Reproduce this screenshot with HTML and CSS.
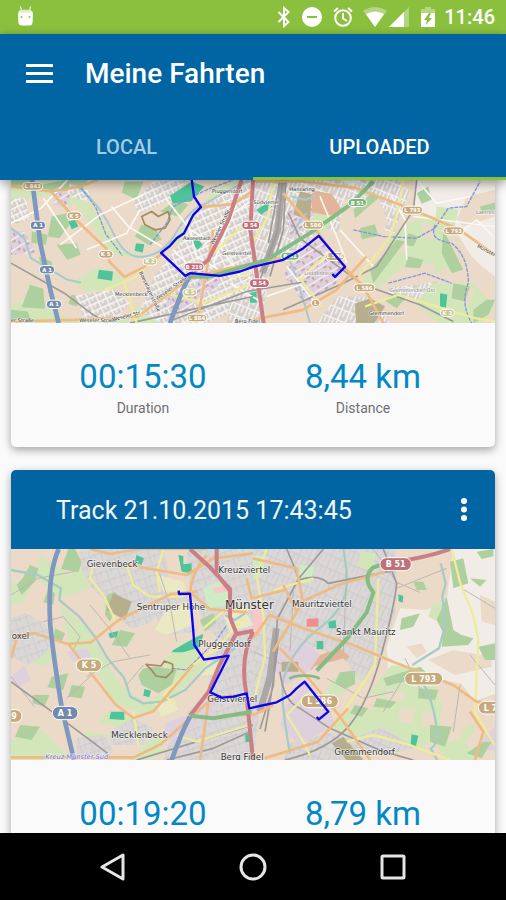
FILE: index.html
```html
<!DOCTYPE html>
<html lang="de">
<head>
<meta charset="utf-8">
<meta name="viewport" content="width=device-width, initial-scale=1">
<title>Meine Fahrten</title>
<link rel="stylesheet" href="styles.css">
</head>
<body>
<div class="status">
  <svg class="droid" viewBox="0 0 17 20" aria-hidden="true"><path class="w" d="M1 8q0-3 3-4h9q3 1 3 4l-.5 9q-.4 2.500-3 2.500h-8q-2.600 0-3-2.500z"/><path d="M4.500 4.500 3.500.5M12.500 4.500l1-4" class="line thin"/><path class="shade" d="M2 5q6-3 13 0l-1 1.500H3z"/><circle class="hole" cx="4.500" cy="11" r="1"/><circle class="hole" cx="12.500" cy="11" r="1"/></svg>
  <div class="status-icons">
    <svg class="bt" viewBox="0 0 14 22" aria-hidden="true"><path class="line" d="m1.500 6 10 10L7 20V2l4.500 4-10 10"/></svg>
    <svg class="dnd" viewBox="0 0 20 20" aria-hidden="true"><circle class="w" cx="10" cy="10" r="10"/><path d="M5 10h10" class="minus"/></svg>
    <svg class="alarm" viewBox="0 0 20 20" aria-hidden="true"><circle class="line" cx="10" cy="11" r="7.800"/><path class="line" d="M10 6v5.500l4 2.500M1 4.500 5 1M19 4.500 15 1"/></svg>
    <svg class="wifi" viewBox="0 0 24 20" aria-hidden="true"><path class="faint" d="M0 4q12-8 24 0L12 20z"/><path class="w" d="M3 7q9-5 18 0l-9 13z"/></svg>
    <svg class="cell" viewBox="0 0 20 20" aria-hidden="true"><path class="faint" d="M20 0v20H0z"/><path class="w" d="M15 5v15H0z"/></svg>
    <svg class="battery" viewBox="0 0 14 20" aria-hidden="true"><path class="faint" d="M4 0h6v2h4v4H0V2h4z"/><path class="w" d="M0 6h14v14H0z"/><path class="hole" d="m8 6-5 7h3l-1 5 6-7H8l2-5z"/></svg>
    <time>11:46</time>
  </div>
</div>
<header class="appbar">
  <div class="toolbar">
    <button class="icon-btn menu" aria-label="Menu"><svg viewBox="0 0 27 19"><path d="M0 1.500h27M0 9.500h27M0 17.500h27"/></svg></button>
    <h1>Meine Fahrten</h1>
  </div>
  <div class="tabs" role="tablist">
    <button role="tab" aria-selected="false">LOCAL</button>
    <button role="tab" aria-selected="true">UPLOADED</button>
  </div>
</header>
<main>
  <article class="card first">
    <svg class="map map-a" viewBox="33 30 1452 430" preserveAspectRatio="xMidYMid slice" role="img" aria-label="Route map">
      <defs>
        <pattern id="blocks" width="26" height="20" patternUnits="userSpaceOnUse" patternTransform="rotate(-24)"><rect class="u" width="26" height="20"/><path d="M0 2H26M5 0V20M17 2V12" class="street"/></pattern>
        <pattern id="blocks2" width="24" height="34" patternUnits="userSpaceOnUse" patternTransform="rotate(22)"><rect class="u" width="24" height="34"/><path d="M0 4H24M4 0V34M15 4V24" class="street"/></pattern>
        <pattern id="works" width="30" height="28" patternUnits="userSpaceOnUse" patternTransform="rotate(-32)"><rect class="i" width="30" height="28"/><path d="M7 5h11v6H7zM21 14h6v10h-6z" class="hall"/><path d="M0 1H30" class="street"/></pattern>
      </defs>
      <rect class="farm" x="33" y="30" width="1452" height="430"/>
      <path class="grass" d="M33 30h220l14 60-60 15-55-30-119 20zM270 100l95 140 90 20 70-60 80-85 35-60 120-35v45l-110 50-80 80-60 45-90 25-80-10-60-80-60-80zM300 290l70 30-10 35-105 10-35-30zM33 400l90-10 30 30 60 30 180-8-20 18H33zM410 410l70 15 40-10-10 45H390z"/>
      <path class="wood" d="M33 30l60 0 8 14-68 5zM100 50l100-20h65l-22 32-75 2zM33 90l45 10 5 40-30 20-20-5zM155 140l45-10 8 35-30 40-35-5zM95 185l48 10-5 30-44-6zM170 225l60-5 12 35-40 15zM115 260l40 15 5 30-32-8zM375 35l55 0-20 55-45-22zM425 165l45 15 15 30-40 15-40-25zM90 345l40 12 5 60-70-5zM215 375l30 5-15 30-25-8zM480 125l50-35 35 15-30 35zM33 420l50 5 12 35H33z"/>
      <path class="blocks" d="M33 90l45-8 10 70-55 5zM210 40l60 25-10 30-60-20zM400 95l60-60 100-5-45 60-100 40zM600 110l80-50 80-30v310l-80 95-60 25H480l-60-35 45-110 50-60 50-70zM225 378l120-20 45 40-40 50H255z"/>
      <path class="blocks2" d="M759 30h430l40 35-50 130-55-30-40 40-120-30-80 75-70 20-30 190H680l20-100 59-40zM1165 355l150-20 20 40-40 35-130-25zM1010 380l100 0 60 80H950zM1180 200l40 0-45 80-30-35z"/>
      <path class="works" d="M860 130l110-60 20 40-120 100zM900 250l65-45 70 90-30 50-90 60-65-90zM33 180l40 5 35 65-75 5zM165 50l45 25-10 40-40-10zM600 300l60 20-10 45-60-5zM510 380l80-35 20 35-60 50-60-20z"/>
      <path class="farm" d="M1030 90l105-10 30 80-70 80-80-50zM1080 185l100 10-10 80-80 0-40-45z"/>
      <path class="pale" d="M1245 30h240v300l-70-70-70-110-100-20zM1020 30h60l-20 20z"/>
      <path class="farm" d="M1370 150l30-70 85-20v80l-95 30zM1380 310l60-25 45 35v60l-75 25z"/>
      <path class="grass" d="M1170 200l100-65 60 35 40 110-60 30-90-30-90 80-45-30 70-60zM1300 340l120 0 65 70-40 50h-130l-70-60zM1310 110l65 10-15 70-55-15zM970 70l60 50-70 75-30-35z"/>
      <path class="farm" d="M1190 210l40 5-10 35-40-5zM1240 285l60-5 10 40-60 0zM1270 160l40 10-10 40-35-8zM1380 350l45 10-20 45-40-15z"/>
      <path class="wood" d="M1060 120l60-55 15 20-70 60zM1080 175l45-12 10 35-50 10zM1110 300l80-90 25 5-95 125zM1250 70l35-20 10 40-30 12zM1330 180l30 60 30 60-35 10-30-60zM1360 340l50 10-15 45-40-10zM1225 190l30 10-15 30-25-5zM1440 110l45-12v24l-40 10zM1420 420l40-30 25 0-20 45-45 25zM1225 260l45 10-10 25-45-3zM1150 390l35-20 30 15-25 30z"/>
      <path class="olive" d="M1065 402l45-17 45 25-32 50h-55zM900 65l35 8-5 80-50-20z"/>
      <path class="school" d="M690 290l60 0v30l-65 5z"/>
      <path class="brick" d="M935 62l60 10 35 55-45 10-50-10z"/>
      <path class="pitch" d="M510 78l65-43 38 15-40 45-55 5zM297 300l42 5-3 28-44-7zM205 155l20-5 10 20-20 8zM408 220l25 3-5 25-24-5zM1320 370l22 4-4 40-18-3zM573 215l20-10 15 20-15 15zM750 370l20-6v35l-20 0zM770 120l30-20 18 10-35 25z"/>
      <path class="water" d="M235 50q70 60 105 140t95 70q60-10 95-75 45-75 90-85 55-35 130-70M33 175l40 30 20 60 110 65 40 8M875 80l40 10 40-15M865 260q35 90 65 200M920 130l-45 60"/>
      <path class="stream" d="M450 225l50-65 20-50 100-50 80-30M242 52l45 60 30 80 50 65M1060 180l90 20 100 5 55-30 40-60 55-5 40-75M1305 165q-10 30 5 40t45 15q50 40 50 120-25 60 10 120M1165 340l110-30 80 30"/>
      <path class="road minor" d="M33 160l90-45 80-85M180 225l120-90 130-60M260 240l120-50 40-70M335 110l50 60 100 60M130 85l60 90 40 60M500 90l70 90 90 50 60 90M560 150l30 110 100 60M610 230l100-120M640 280l60-150 59-40M520 240l60 60M960 80l50 120 30 80M1175 80l40 70 5 120M1020 180l100 110M1240 140l245 30M1390 180l40-30 50 50M1250 30l60 70 100-20M890 330l100-75M860 290l90 115M800 380l100-35M690 340l100 60"/>
      <path class="yard" d="M848 30l-15 150-45 130"/>
      <path class="rail" d="M33 280l160 90 80 60 50 30M520 450l220-85 180-30M390 460l180-40 190-40M848 30l-15 150-60 170M858 30l-8 150-40 140M840 30l-35 190M865 130l35 75 80 60 110 80 170 60 100 50M850 420l180-80 100-50 110-170 10-90"/>
      <path class="road tertiary" d="M470 260l-60 60-95 40M540 350l40-40 70-70 110-100M500 370l110 30 149-60M820 30l-15 110-45 75M1210 30q-20 130-45 180l-90 110M900 330l100-95M895 320l70 90M1095 410l100-35 100 30 130 40 60 10M370 330l40 130"/>
      <path class="road second" d="M33 50l120 15 90-15 50-20M153 65l80 90 85 80 10 40 45 46 60-30 60-45M33 455l190-5 190-10 150-110 100-30 180-35M603 112l100-10 56-40M850 70q30 40 90 100l90 120 60 60 60 110M640 180q-20 130-50 280M759 35l150 0 160 20 170 65 140 60 105 75M759 450l150-30 100-60 90-100"/>
      <path class="road primary" d="M725 30l-40 120-60 120-60 50M759 30l-8 150 40 280"/>
      <path class="road green" d="M1120 35l-70 70-120 85-130 80-170 50h-70"/>
      <path class="road motor" d="M96 30l25 190 30 140 25 100M568 318q-25 50-58 142"/>
      <path class="bound" d="M425 140l30-15 20 15 30-15 5 25-15 25-30 5-30-15z"/>
      <g class="label s">
        <text x="636" y="70">Pluggendorf</text><text x="549" y="212">Aaseestadt</text><text x="667" y="255">Geistviertel</text><text x="345" y="380">Mecklenbeck</text><text x="760" y="102">Südviertel</text><text class="dim" x="913" y="317">Loddenheide</text><text class="dim" x="1170" y="368">Gremmendorf-Ost</text><text x="1107" y="436">Gremmendorf</text><text class="dim" x="1428" y="132">Laerfeld</text><text x="705" y="459">Berg Fidel</text><text x="33" y="458">er Straße</text><text x="238" y="456">Weseler Straße</text><text x="338" y="454" transform="rotate(-14 338 454)">Weseler Str.</text><text x="472" y="392" transform="rotate(-36 472 392)">Weseler Straße</text><text x="417" y="307" transform="rotate(65 417 307)">Boeselagerstraße</text><text x="640" y="225" transform="rotate(-64 640 225)">Weseler Straße</text><text x="1430" y="232" transform="rotate(28 1430 232)">Münster</text><text x="868" y="64">Hansaring</text>
      </g>
      <g class="shield tan"><rect x="68" y="38" width="60" height="23" rx="11"/><text x="98" y="56">L 843</text><rect x="201" y="126" width="43" height="23" rx="11"/><text x="222" y="144">K 5</text><rect x="296" y="242" width="43" height="23" rx="11"/><text x="317" y="260">K 5</text><rect x="562" y="433" width="58" height="23" rx="11"/><text x="591" y="451">L 884</text><rect x="908" y="154" width="62" height="24" rx="12"/><text x="939" y="173">L 586</text><rect x="977" y="248" width="56" height="24" rx="12"/><text x="1005" y="266">L 586</text><rect x="1061" y="342" width="64" height="24" rx="12"/><text x="1093" y="361">L 586</text><rect x="1206" y="109" width="62" height="24" rx="12"/><text x="1237" y="128">L 793</text><rect x="1330" y="171" width="62" height="24" rx="12"/><text x="1361" y="190">L 793</text><rect x="934" y="389" width="26" height="22" rx="11"/><text x="947" y="407">L</text></g>
      <g class="shield soft"><rect x="429" y="264" width="42" height="22" rx="11"/><text x="450" y="281">K 2</text><rect x="548" y="357" width="42" height="22" rx="11"/><text x="569" y="374">K 5</text><rect x="1321" y="418" width="42" height="22" rx="11"/><text x="1342" y="435">K 3</text></g>
      <g class="shield blue"><rect x="91" y="154" width="46" height="25" rx="12"/><text x="114" y="173">A 1</text><rect x="118" y="287" width="46" height="25" rx="12"/><text x="141" y="306">A 1</text><rect x="139" y="391" width="46" height="25" rx="12"/><text x="162" y="410">A 1</text></g>
      <g class="shield red"><rect x="552" y="279" width="60" height="24" rx="12"/><text x="582" y="298">B 219</text><rect x="725" y="154" width="54" height="25" rx="12"/><text x="752" y="173">B 54</text><rect x="748" y="327" width="60" height="26" rx="13"/><text x="778" y="347">B 54</text></g>
      <g class="shield bgreen"><rect x="1044" y="86" width="56" height="24" rx="12"/><text x="1072" y="105">B 51</text><rect x="842" y="247" width="56" height="24" rx="12"/><text x="870" y="266">B 51</text></g>
      <path class="route" d="M574 20l8 60 21 32-23 23-28 55-22 15-20 23-27 21 73 69 14-8 90 8 60-13 39-14 91-21 60-35 46-37 79 93-30 30-8-8"/>
    </svg>
    <div class="stats">
      <p><strong>00:15:30</strong><span>Duration</span></p>
      <p><strong>8,44 km</strong><span>Distance</span></p>
    </div>
  </article>
  <article class="card">
    <header class="card-head">
      <h2>Track 21.10.2015 17:43:45</h2>
      <button class="icon-btn more" aria-label="More options"><svg viewBox="0 0 6 23"><circle cx="3" cy="3" r="3"/><circle cx="3" cy="11.500" r="3"/><circle cx="3" cy="20" r="3"/></svg></button>
    </header>
    <svg class="map map-b" viewBox="33 12 1452 633" preserveAspectRatio="xMidYMid slice" role="img" aria-label="Route map">
      <defs>
        <pattern id="town" width="34" height="28" patternUnits="userSpaceOnUse" patternTransform="rotate(-18)"><rect class="u2" width="34" height="28"/><path d="M0 5H34M8 5V28M22 0V16" class="lane"/></pattern>
        <pattern id="town2" width="30" height="38" patternUnits="userSpaceOnUse" patternTransform="rotate(24)"><rect class="u2" width="30" height="38"/><path d="M0 5H30M8 5V26M22 0V38" class="lane"/></pattern>
      </defs>
      <rect class="farm" x="33" y="12" width="1452" height="633"/>
      <path class="grass" d="M120 30l90 60 40-20 20 60-90 30-70-60zM180 180l80 70 50 80 50 90 70 50 70-30 100-90 50-30-120 130-100 60-90-40-50-90-80-80zM33 110l55 20-20 45-35 5zM65 330l60-30 50 35-50 30zM33 585l95-30 60 60 35 30H33zM250 560l80 10-20 40-60-5zM490 350l60-60 45 10 10 30-80 80zM440 590l50-20-5 60-60 15h-30zM325 500l70 15-20 35-80-15z"/>
      <path class="town" d="M240 20l60-8h190l15 60-10 100-40 60-60 20-45-40-40-50-40-40-30-60zM33 220l45-15 55 30 25 55-25 40-50 30-50-25zM230 580l80-10 30 45-20 30H230zM330 560l70-40 60 30-30 50-100 0zM460 160l100-20 30 120-80 10-40-50zM560 20l55-8h144v633H490l20-60 50-80 60-60 20-110 30-45-50-40-50-110z"/>
      <path class="town2" d="M759 12h365l70 0 0 100-10 100-40 130-55 65-75-40-50-65-85 20-90 100-30 223H759zM1075 535l120-15 50 40-5 50-60 15-130-20zM1000 560l60 10 30 75H850l20-50z"/>
      <path class="park" d="M610 130l45-20 40 20-10 50-60 10zM759 30l40 5-15 60-25 10zM900 60l45 5-15 50-35-5z"/>
      <path class="indus" d="M830 320l90-30 40 40-30 45-70 45-50-60zM860 480l60-70 65 70 20 60-110 60-55-60zM33 395l40-35 20 45-35 20zM200 320l60-10 15 25-55 15zM500 530l50-15 45 15-60 60-50-10zM590 470l50-10 0 50-50 10zM1445 580l40-35v75l-30-10z"/>
      <path class="school" d="M500 190l70-20 10 70-80 30-35-15zM590 390l35-40 35 0-20 40zM670 210l60-20 30 50-70 20zM460 470l60-10 15 35-50 20zM470 90l80 20 10 30-70 0z"/>
      <path class="brick" d="M960 330l60-20 30 25-40 30-80 10z"/>
      <path class="pale" d="M1200 190l80 5 60-30 20-153h125v435l-60 20-40-50-90-20-90 10-40-20-5-80z"/>
      <path class="farm" d="M1185 12h155v80l-40 70-70 10-40-35zM1285 345l75-30 115 20 0 30-110 25zM1440 150l45 20v70l-40-10zM940 365l90-25 25 30-50 30-80 15zM1075 450l70 10-20 60-65-10zM1220 305l45-10 15 25-30 20z"/>
      <path class="grass" d="M1175 360l90 10 40 50 20 65-10 90-60 40-110-70-70 30-90-30 80-60 50-50zM1310 600l80-20 35 65h-90zM1000 400l85-10-60 60-60 10zM1080 20l50 5-15 50-40-10zM1300 170l45 10-20 55-40-20zM1400 540l30-10-20 50-40 20z"/>
      <path class="farm" d="M1090 445l50 5-20 45-50-5zM1160 435l60 5-15 30-55-8zM1200 490l45 5-5 40-45-5zM1270 500l30 0 5 50-40-5zM1260 385l35 15-15 30-35-10z"/>
      <path class="wood" d="M205 12h20l20 40-10 30-52-10zM90 60l25 10-10 40-40 40-15-30 18-20zM145 130l20 15-5 35-30-8zM165 250l30 15-10 25-25-5zM360 255l45 10-25 40-45-5zM155 395l50-10-15 50-48-8zM98 450l50 0-15 35-35-10zM215 420l40 5-10 35-40-5zM60 540l60 5-25 40-50-10zM430 370l40-5 60 10-15 45-40 25-50-25-10-30zM320 150l25-10 15 20-30 70-15-20zM1205 220l55-15-20 40-40 10zM1240 110l30 0 10 25-30 0zM1340 155l20 100 25 15 35 10-15 20-80 5 5-40-20-40zM1350 50l40-10 15 75-45 15zM1430 20l50-8v22l-35 8zM1435 305l50-10v50l-30 0zM1410 100l50 5-20 20zM1150 400l110-35 20 18-60 25-60 15zM1020 382l45-5 0 40-30 15-30-20zM1130 460l60 10-20 20-50-5zM1290 540l65 5-20 60-45-15zM1255 430l60 5-10 30-50-5zM1065 480l40 10-20 25-35-10zM1400 625l50-35 25 0-30 50zM600 225l40-20 10 25-35 30z"/>
      <path class="olive" d="M340 145l55 25-20 55-55-30zM995 595l35-20 60 70h-50zM845 350l50 0 0 30-50 0z"/>
      <path class="pink" d="M759 185l25 15 10 60-35 10zM635 130l40-10 15 20-45 5z"/>
      <path class="redblock" d="M920 222l35-2 0 25-35 0z"/>
      <path class="pitch" d="M520 315l70-40 20-8-10 40-50 15-35 0zM535 30l15 3 0 25 25-3 0 30-30-5zM410 30l22 10-8 20-20-8zM325 265l30-7-5 18-20 4zM333 500l40 0 0 25-45-3zM433 432l20 5-5 20-18-5zM985 230l22-5 2 25-22 0zM1195 148l15 5-2 20-13-5zM1235 568l20 4-8 35-16-5zM735 570l20-8 0 28-18 2zM950 288l20 0 0 25-20 0z"/>
      <path class="water wide" d="M33 75l80 15 70 40-5 35 60 50 50 65 35 60 50 60 18 55 40 20 55-5 70-35 60-65 90-60M1030 12q12 60 10 110-5 60-60 110l-50 40q-60 60-80 130-10 60 20 223M1322 55l15 60-10 40 10 80-20 75-80 50M1262 400q35 60 45 130t-15 80l20 35M675 210l30 15 30-20"/>
      <path class="stream" d="M515 370l45 5 30-30 60-60 30-45"/>
      <path class="road minor2" d="M33 150l80-50 110-20M33 395l70 90M260 395l80-45 110-20M130 230l60-15 50 60-20 40M200 460l80-75M270 180l50 60 70 100M380 420l50-60M480 90l30 90 20 110M1120 12l70 100 70 30M1190 130l150-60M1385 130l100 60M1215 340l60 120M980 400l110 60 90-20M1150 500l60-100M1380 420l-20 140M760 320l90 40M880 140l-10 180M1040 80l-10 240M1410 330l75 90"/>
      <path class="yard" d="M829 250l-20 150-30 100"/>
      <path class="rail" d="M33 410l150 110 140 105M410 645l230-70 119-35M500 645l140-35 110-50M860 12q30 70 35 90M970 12l-75 90-63 120-12 200-40 130M835 290q-15 130-40 270M840 380q10 90 60 110l90 60 160 70 90 25M855 645q130-30 190-100t100-220 45-210L1150 12M895 105q60-20 90 10l150-30 60-10"/>
      <path class="road tertiary" d="M490 12l-20 70 10 60M280 60l-10 40 40 50 40 85M380 60l20 60 50 35 100 0M610 250l60-50 90-10M530 480l-40-30 90-90 80-60 70-80M530 570l60 20 110-35 50-15M800 12l-30 80 20 120 5 120-30 120M820 135l120-35M1135 100l-10 260-100 150M860 510l50 80 20 40M860 510l70-70M1355 12l25 100 40 100 15 70-10 220 60 100M1040 590l80-20 110 30 120 45M400 500l15 100"/>
      <path class="road second" d="M270 12l60 15 90-15 200 0M33 340l20-70 50-5 100 32 70-5 80-65 100-50 60-30 80-8M205 297l70 90 70 90 55 42 60-20 120-140M33 637l370 0 80-40 90-80 70-60 60-5M380 60l180 30 80-50 119-15M620 30q-45 50-50 112l60 50 110 10M759 40l130 30 20 100-60 100-30 50M759 280l50-70 100 40 150 50 120 50 180 70 70 50 60 5M1410 500l40 60-25 85M840 310l90 95 90 110 90 130M794 640l160-50 90-100M630 440l-30 205M740 100l15 60 100-25M850 120l40 80M895 175l120-55 140-40M670 510l90 0 60-30"/>
      <path class="road primary" d="M570 12l60 55 60 65 0 85 20 50 50-10M650 12v75l40 50M706 270l-50 95-30 75-56 72M759 260q-40 80-20 185l20 200M1350 12q-50 20-155 38"/>
      <path class="road green" d="M1165 52l-45 15q-35 30 0 75l-20 60-60 80-90 95M570 512l70 8 115-20"/>
      <path class="road motor" d="M176 12q-35 80-25 230 10 100 35 250l36 153M570 515q-25 45-55 130"/>
      <path class="bound" d="M438 358l45 5 10-15 25 10 0 20-20 20-30-5-15-20z"/>
      <g class="label m">
        <text x="260" y="67">Gievenbeck</text><text x="655" y="84">Kreuzviertel</text><text x="410" y="196">Sentruper Höhe</text><text x="595" y="306">Pluggendorf</text><text x="622" y="470">Geistviertel</text><text x="334" y="579">Mecklenbeck</text><text x="662" y="645">Berg Fidel</text><text x="876" y="185">Mauritzviertel</text><text x="1008" y="271">Sankt Mauritz</text><text x="1003" y="629">Gremmendorf</text><text x="35" y="281">oxel</text>
        <text class="big" x="675" y="191">Münster</text>
        <text class="junction" x="136" y="641">Kreuz Münster-Süd</text>
      </g>
      <g class="shield l tan"><rect x="229" y="342" width="76" height="38" rx="19"/><text x="267" y="370">K 5</text><rect x="-10" y="494" width="76" height="38" rx="19"/><text x="42" y="522">9</text><rect x="1214" y="382" width="114" height="38" rx="19"/><text x="1271" y="410">L 793</text><rect x="904" y="450" width="111" height="38" rx="19"/><text x="959" y="478">L 586</text><rect x="1435" y="469" width="114" height="38" rx="19"/><text x="1488" y="497">L 793</text></g>
      <g class="shield l blue"><rect x="157" y="484" width="77" height="40" rx="20"/><text x="195" y="513">A 1</text></g>
      <g class="shield l red"><rect x="1140" y="38" width="94" height="39" rx="19"/><text x="1187" y="67">B 51</text></g>
      <path class="arch" d="M868 402q10-10 45-10t46 10"/>
      <path class="route" d="M536 137l1 10 33-1 10 114 3 40 29 44 38-6 36-6-55 110 34 16 35-3 40-10 8 45 82-18 40-22 20-20 24-20 71 90-28 23-7-7"/>
    </svg>
    <div class="stats">
      <p><strong>00:19:20</strong><span>Duration</span></p>
      <p><strong>8,79 km</strong><span>Distance</span></p>
    </div>
  </article>
</main>
<nav class="navbar" aria-label="System">
  <button aria-label="Back"><svg viewBox="0 0 28 28"><path d="M24 2v24L3 14z"/></svg></button>
  <button aria-label="Home"><svg viewBox="0 0 28 28"><circle cx="14" cy="14" r="12"/></svg></button>
  <button aria-label="Overview"><svg viewBox="0 0 28 28"><rect x="3" y="3" width="22" height="22" rx="1"/></svg></button>
</nav>
</body>
</html>
```
FILE: styles.css
```css
* { box-sizing: border-box; margin: 0; }

body {
  display: flex;
  flex-direction: column;
  height: 100vh;
  overflow: hidden;
  background: #fafafa;
  font-family: Roboto, "Liberation Sans", sans-serif;
}

button {
  border: 0;
  padding: 0;
  background: none;
  color: inherit;
  font: inherit;
}

svg { display: block; flex: none; }

/* Status bar */
.status {
  display: flex;
  flex: none;
  align-items: center;
  justify-content: space-between;
  height: 34px;
  padding: 0 11px 0 17px;
  background: #8bc03f;
  color: #fff;
}
.status-icons { display: flex; align-items: center; }
.status time { font-size: 20px; font-weight: 500; line-height: 34px; }
.w { fill: #fff; }
.line { fill: none; stroke: #fff; stroke-width: 2; }
.thin { stroke-width: 1; }
.minus { stroke: #8bc03f; stroke-width: 2; }
.hole { fill: #8bc03f; }
.faint { fill: #fff; opacity: .35; }
.shade { fill: #dcecc4; }
.droid { width: 17px; height: 20px; margin-bottom: 2px; }
.bt { width: 14px; height: 22px; margin-right: 11px; }
.dnd { width: 20px; height: 20px; margin-right: 11px; }
.alarm { width: 20px; height: 20px; margin-right: 10px; }
.wifi { width: 24px; height: 20px; margin-right: 2px; }
.cell { width: 20px; height: 20px; margin-right: 12px; }
.battery { width: 14px; height: 20px; margin-right: 9px; }

/* App bar */
.appbar {
  position: relative;
  z-index: 1;
  flex: none;
  background: #0065a2;
  color: #fff;
  box-shadow: 0 3px 10px rgba(0, 0, 0, .4);
}
.toolbar {
  display: flex;
  align-items: center;
  gap: 32px;
  height: 80px;
  padding: 0 26px;
}
.menu { padding-bottom: 2px; }
.menu svg { width: 27px; height: 19px; }
.menu path { stroke: #fff; stroke-width: 3; }
h1 { font-size: 28px; font-weight: 500; line-height: 40px; }
.tabs { display: flex; }
.tabs button {
  flex: 1;
  height: 66px;
  border-bottom: 3px solid transparent;
  padding-top: 3px;
  font-size: 20px;
  font-weight: 500;
  color: #a6cbe0;
}
.tabs button[aria-selected="true"] {
  border-color: #8bc03f;
  color: #fff;
}

/* Track list */
main {
  display: flex;
  flex: 1;
  flex-direction: column;
  gap: 23px;
  min-height: 0;
  overflow: hidden;
  padding: 0 11px;
}
.card {
  flex: none;
  border-radius: 5px;
  background: #fafafa;
  box-shadow: 0 3px 9px rgba(0, 0, 0, .35);
}
.card.first { border-radius: 0 0 5px 5px; }
.card-head {
  display: flex;
  align-items: center;
  justify-content: space-between;
  height: 79px;
  border-radius: 5px 5px 0 0;
  padding: 0 28px 0 45px;
  background: #0065a2;
  color: #f2f5f8;
}
h2 { padding-top: 3px; font-size: 25px; font-weight: 400; line-height: 36px; }
.more svg { width: 6px; height: 23px; fill: #fff; }
.stats {
  display: grid;
  grid-template-columns: 1fr 1fr;
  height: 124px;
  padding: 34px 22px 0;
}
.stats p { display: flex; flex-direction: column; align-items: center; }
.stats strong {
  color: #0288c4;
  font-size: 33px;
  font-weight: 400;
  line-height: 40px;
}
.stats span { color: #707070; font-size: 14px; line-height: 22px; }

/* Maps */
.map { width: 100%; overflow: hidden; }
.map-a { aspect-ratio: 484 / 143; }
.map-b { aspect-ratio: 484 / 211; }
.farm { fill: #ebdac7; }
.pale { fill: #f1ede6; }
.grass { fill: #d3e6b9; }
.park { fill: #cdebc4; }
.wood { fill: #aed09e; }
.olive { fill: #b6ae8c; }
.indus { fill: #dfd0dd; }
.school { fill: #ebe8c4; }
.brick { fill: #e3b497; }
.pitch { fill: #4fc49a; }
.pink { fill: #f8c8c8; }
.redblock { fill: #ee8f8f; }
.u { fill: #d6d0cd; }
.u2 { fill: #dad7d6; }
.i { fill: #dfd0dd; }
.hall { fill: #c6aaa8; }
.street { fill: none; stroke: #f8f6f4; stroke-width: 4; }
.lane { fill: none; stroke: #c8c5c5; stroke-width: 2; }
.blocks { fill: url(#blocks); }
.blocks2 { fill: url(#blocks2); }
.works { fill: url(#works); }
.town { fill: url(#town); }
.town2 { fill: url(#town2); }
.water, .stream, .rail, .yard, .road, .route, .bound, .arch { fill: none; stroke-linejoin: round; }
.water { stroke: #a9c8cf; stroke-width: 6; }
.wide { stroke: #a8cbc6; stroke-width: 7; }
.stream { stroke: #8199d8; stroke-width: 4; stroke-dasharray: 12 3; }
.rail { stroke: #9d9a99; stroke-width: 5; }
.yard { stroke: #aaa7a6; stroke-width: 20; }
.minor { stroke: #fbf9f5; stroke-width: 5; }
.minor2 { stroke: #bdb8b3; stroke-width: 3; }
.tertiary { stroke: #eeeb9d; stroke-width: 7; }
.second { stroke: #edbb83; stroke-width: 8; }
.primary { stroke: #cb7e83; stroke-width: 12; }
.green { stroke: #84bc83; stroke-width: 12; }
.motor { stroke: #7e98bf; stroke-width: 14; }
.bound { stroke: #a18b5f; stroke-width: 5; }
.arch { stroke: #8ab988; stroke-width: 8; }
.route { stroke: #0b04ea; stroke-width: 7; }
.label {
  fill: #333;
  stroke: rgba(255, 255, 255, .6);
  stroke-width: 4;
  paint-order: stroke;
  font-family: "DejaVu Sans", sans-serif;
}
.s { font-size: 15px; }
.m { font-size: 26px; }
.big { font-size: 36px; }
.dim { fill: #857e83; }
.junction { fill: #7471e0; font-size: 20px; font-style: italic; }
.shield {
  font: 700 16px "DejaVu Sans", sans-serif;
  text-anchor: middle;
  stroke-width: 3;
}
.shield rect { stroke: #fff; }
.shield text { fill: #fff; }
.l { font-size: 24px; }
.tan rect { fill: #c6aa7c; }
.soft rect { fill: #cbc895; }
.blue rect { fill: #7289ad; }
.red rect { fill: #bf707b; }
.bgreen rect { fill: #7eb47c; }

/* System navigation */
.navbar {
  position: relative;
  z-index: 1;
  display: flex;
  flex: none;
  align-items: center;
  justify-content: center;
  gap: 112px;
  height: 67px;
  background: #000;
}
.navbar svg {
  width: 28px;
  height: 28px;
  fill: none;
  stroke: #e6e6e6;
  stroke-width: 3;
  stroke-linejoin: round;
}
```
